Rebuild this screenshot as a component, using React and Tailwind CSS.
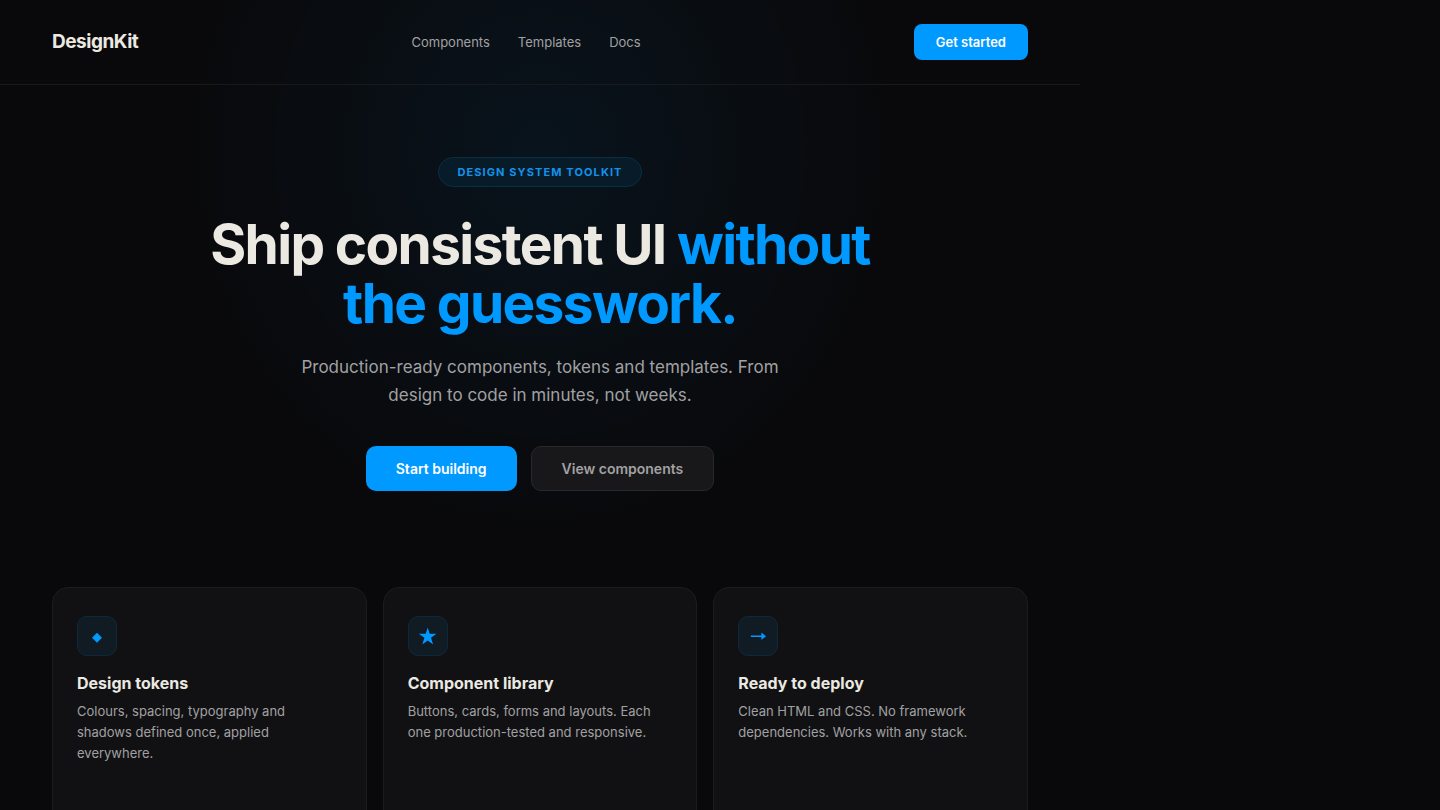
const links = ["Components", "Templates", "Docs"];

function DiamondIcon() {
  return (
    <svg aria-hidden="true" viewBox="0 0 20 20" className="size-5 fill-[#0099ff]">
      <path d="M10 6.8 15 11.8 10 16.8 5 11.8Z" />
    </svg>
  );
}

function StarIcon() {
  return (
    <svg aria-hidden="true" viewBox="0 0 20 20" className="size-5 fill-[#0099ff]">
      <path d="M9.7 1.5 11.7 7.8H18.5L13 11.8 15.1 18.4 9.7 14.4 4.3 18.4 6.4 11.8 0.9 7.8H7.7Z" />
    </svg>
  );
}

function ArrowIcon() {
  return (
    <svg aria-hidden="true" viewBox="0 0 20 20" className="size-5 fill-[#0099ff]">
      <path d="M2.8 9.6H13.4V6.4L18 10.2 13.4 14V10.9H2.8Z" />
    </svg>
  );
}

const features = [
  {
    title: "Design tokens",
    text: "Colours, spacing, typography and shadows defined once, applied everywhere.",
    Icon: DiamondIcon,
  },
  {
    title: "Component library",
    text: "Buttons, cards, forms and layouts. Each one production-tested and responsive.",
    Icon: StarIcon,
  },
  {
    title: "Ready to deploy",
    text: "Clean HTML and CSS. No framework dependencies. Works with any stack.",
    Icon: ArrowIcon,
  },
];

function Feature({ title, text, Icon }) {
  return (
    <article className="min-h-64 rounded-2xl border border-[#1c1c1e] bg-[#111113] px-6 py-7">
      <div className="flex size-10 items-center justify-center rounded-[10px] border border-[#0d2a3c] bg-[#101b23]">
        <Icon />
      </div>
      <h2 className="mt-[17px] text-base leading-5 font-bold text-[#ebe9e1]">{title}</h2>
      <p className="mt-2 text-[13px] leading-[21px] text-[#a1a1a3]">{text}</p>
    </article>
  );
}

export default function App() {
  return (
    <div className="h-screen overflow-hidden bg-[#09090b] font-['Inter',sans-serif] antialiased">
      <div className="relative w-3/4">
        <div
          aria-hidden="true"
          className="absolute inset-x-0 top-0 h-[560px] bg-[radial-gradient(ellipse_360px_390px_at_50%_150px,rgba(0,153,255,0.07),transparent)]"
        />
        <header className="relative flex items-center justify-between border-b border-[#19191b] px-13 py-6">
          <a href="#" className="text-[19px] leading-6 font-bold tracking-tight text-[#ebe9e1]">
            DesignKit
          </a>
          <nav className="flex gap-7">
            {links.map((label) => (
              <a key={label} href="#" className="text-[13px] leading-5 text-[#a1a1a3]">
                {label}
              </a>
            ))}
          </nav>
          <button
            type="button"
            className="rounded-lg bg-[#0099ff] px-[22px] py-2 text-[13px] leading-5 font-semibold text-white"
          >
            Get started
          </button>
        </header>
        <main className="relative px-13">
          <section className="flex flex-col items-center pt-18 text-center">
            <p className="rounded-full border border-[#083045] bg-[#071b29] px-[18px] py-1.5 text-[11px] leading-4 font-bold tracking-widest text-[#1492ea] uppercase">
              Design system toolkit
            </p>
            <h1 className="mt-7 max-w-[700px] text-[55px] leading-[59px] font-bold tracking-[-0.03em] text-[#ebe9e1]">
              Ship consistent UI <span className="text-[#0099ff]">without the guesswork.</span>
            </h1>
            <p className="mt-5 max-w-[480px] text-[17px] leading-7 text-[#a1a1a3]">
              Production-ready components, tokens and templates. From design to code in minutes, not
              weeks.
            </p>
            <div className="mt-[37px] flex gap-3.5">
              <button
                type="button"
                className="rounded-[10px] bg-[#0099ff] px-[30px] py-[13px] text-sm leading-[17px] font-semibold text-white"
              >
                Start building
              </button>
              <button
                type="button"
                className="rounded-[10px] border border-[#28282a] bg-[#18181a] px-[30px] py-[13px] text-sm leading-[17px] font-semibold text-[#a1a1a3]"
              >
                View components
              </button>
            </div>
          </section>
          <section className="mt-24 grid grid-cols-3 gap-4">
            {features.map((feature) => (
              <Feature key={feature.title} {...feature} />
            ))}
          </section>
        </main>
      </div>
    </div>
  );
}
